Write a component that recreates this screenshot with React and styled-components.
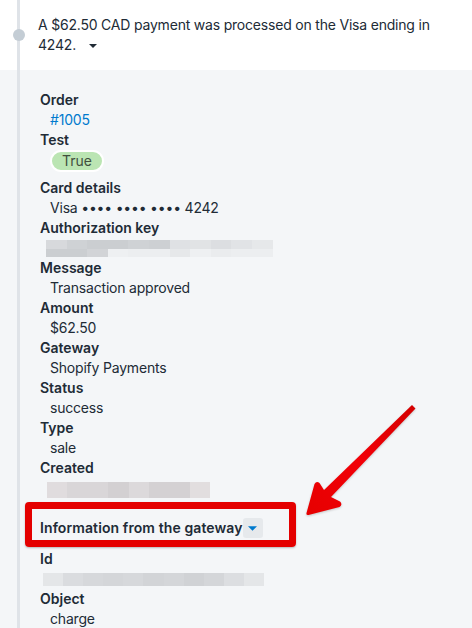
import React from 'react';
import styled, { createGlobalStyle } from 'styled-components';

const GlobalStyle = createGlobalStyle`
  html, body {
    margin: 0;
    padding: 0;
    background: #f4f6f8;
  }
  body {
    font-family: Inter, "Noto Sans", "Liberation Sans", sans-serif;
    font-size: 14px;
    line-height: 20px;
    color: #212b36;
  }
`;

const authRows = [
  {
    height: 9,
    cells: ['#d7d9dc', '#cfd2d5', '#cbced1', '#cbced1', '#cfd2d5', '#cdd0d3', '#dfe1e4', '#e1e3e5', '#dcdee1', '#e1e3e6', '#e6e8ea'],
  },
  {
    height: 8,
    cells: ['#cbced1', '#cbced1', '#d2d4d7', '#eef0f2', '#eceef0', '#eceef0', '#e6e8ea', '#eef0f2', '#eaecee', '#eceef0', '#eceef0'],
  },
];

const createdRows = [
  {
    height: 16,
    cells: ['#e0dcde', '#d9d6d8', '#d9d6d8', '#d3d0d2', '#dcd9db', '#d4d1d3', '#d4d1d3', '#e2dedf'],
  },
];

const idRows = [
  {
    height: 13,
    cells: ['#e4e6e8', '#dadcdf', '#d6d8db', '#d4d6d9', '#d6d8db', '#d2d4d7', '#d4d6d9', '#d0d2d5', '#d4d6d9', '#dcdee1', '#e4e6e8'],
  },
];

function Redacted({ rows, offset, cell, top }) {
  return (
    <RedactedWrap offset={offset} top={top}>
      {rows.map((row, i) => (
        <RedactedRow key={i} h={row.height}>
          {row.cells.map((c, j) => (
            <Pixel key={j} color={c} w={cell} />
          ))}
        </RedactedRow>
      ))}
    </RedactedWrap>
  );
}

function Field({ label, children }) {
  return (
    <FieldBlock>
      <Label>{label}</Label>
      {children}
    </FieldBlock>
  );
}

function App() {
  return (
    <>
      <GlobalStyle />
      <Timeline>
        <Event>
          <EventInner>
            <Dot />
            <EventText>
              A $62.50 CAD payment was processed on the Visa ending in 4242.
              <Caret viewBox="0 0 8 4" width="8" height="4">
                <path d="M0 0h8L4 4z" fill="#212b36" />
              </Caret>
            </EventText>
          </EventInner>
        </Event>

        <Details>
          <DetailsInner>
            <Field label="Order">
              <Value>
                <Link href="#">#1005</Link>
              </Value>
            </Field>
            <Field label="Test">
              <BadgeRow>
                <Badge>True</Badge>
              </BadgeRow>
            </Field>
            <Field label="Card details">
              <Value>Visa •••• •••• •••• 4242</Value>
            </Field>
            <Field label="Authorization key">
              <Redacted rows={authRows} offset={6} cell={20.6} top={2} />
            </Field>
            <Field label="Message">
              <Value>Transaction approved</Value>
            </Field>
            <Field label="Amount">
              <Value>$62.50</Value>
            </Field>
            <Field label="Gateway">
              <Value>Shopify Payments</Value>
            </Field>
            <Field label="Status">
              <Value>success</Value>
            </Field>
            <Field label="Type">
              <Value>sale</Value>
            </Field>
            <Field label="Created">
              <Redacted rows={createdRows} offset={7} cell={20.4} top={4} />
            </Field>

            <SectionHeader>
              <SectionTitle>Information from the gateway</SectionTitle>
              <ToggleButton type="button">
                <svg viewBox="0 0 8 4" width="9" height="5">
                  <path d="M0 0h8L4 4z" fill="#007ace" />
                </svg>
              </ToggleButton>
              <Highlight />
              <Arrow viewBox="0 0 120 120" width="120" height="120">
                <defs>
                  <linearGradient id="arrowFill" x1="0" y1="1" x2="1" y2="0">
                    <stop offset="0" stopColor="#e60000" />
                    <stop offset="0.5" stopColor="#f20008" />
                    <stop offset="1" stopColor="#d40000" />
                  </linearGradient>
                </defs>
                <path
                  d="M112 5 L115.5 8.5 L31 97 L40 101.5 Q43 104.5 39.5 107 L8.5 115 Q6 115.5 6.5 113 L14.5 84 Q16.5 80.5 19.5 83 L24 90 Z"
                  fill="url(#arrowFill)"
                />
              </Arrow>
            </SectionHeader>

            <Field label="Id">
              <Redacted rows={idRows} offset={3} cell={20.1} top={4} />
            </Field>
            <Field label="Object">
              <Value>charge</Value>
            </Field>
          </DetailsInner>
        </Details>
      </Timeline>
    </>
  );
}

const Timeline = styled.div`
  width: 472px;
  min-height: 628px;
  display: flex;
  flex-direction: column;
  background: #f4f6f8;
`;

const Event = styled.div`
  background: #ffffff;
  padding-left: 17px;
`;

const EventInner = styled.div`
  position: relative;
  border-left: 3px solid #dfe3e8;
  padding: 15px 30px 15px 18px;
`;

const Dot = styled.span`
  position: absolute;
  left: -7.5px;
  top: 29px;
  width: 12px;
  height: 12px;
  border-radius: 50%;
  background: #c4cdd5;
`;

const EventText = styled.p`
  margin: 0;
  max-width: 410px;
  font-size: 14px;
  line-height: 20px;
  letter-spacing: -0.2px;
  color: #212b36;
`;

const Caret = styled.svg`
  display: inline-block;
  margin-left: 13px;
  vertical-align: middle;
`;

const Details = styled.div`
  flex: 1;
  padding-left: 17px;
`;

const DetailsInner = styled.div`
  min-height: 100%;
  border-left: 3px solid #dfe3e8;
  padding: 20px 0 0 20px;
`;

const FieldBlock = styled.div`
  display: flex;
  flex-direction: column;
`;

const Label = styled.div`
  font-weight: 600;
  font-size: 14px;
  line-height: 20px;
  color: #212b36;
`;

const Value = styled.div`
  margin-left: 10px;
  font-size: 14px;
  line-height: 20px;
  letter-spacing: -0.2px;
  color: #212b36;
`;

const Link = styled.a`
  color: #007ace;
  text-decoration: none;
`;

const BadgeRow = styled.div`
  display: flex;
  margin-left: 10px;
  padding-bottom: 6px;
`;

const Badge = styled.span`
  display: inline-flex;
  align-items: center;
  height: 22px;
  padding: 0 10px;
  border: 2px solid #ffffff;
  border-radius: 12px;
  background: #bbe5b3;
  color: #414f3e;
  font-size: 14px;
  line-height: 20px;
  box-sizing: border-box;
`;

const RedactedWrap = styled.div`
  height: 20px;
  padding-top: ${p => p.top}px;
  margin-left: ${p => p.offset}px;
  box-sizing: border-box;
  display: flex;
  flex-direction: column;
`;

const RedactedRow = styled.div`
  display: flex;
  height: ${p => p.h}px;
`;

const Pixel = styled.span`
  width: ${p => p.w}px;
  height: 100%;
  background: ${p => p.color};
`;

const SectionHeader = styled.div`
  position: relative;
  display: inline-flex;
  align-self: flex-start;
  align-items: center;
  margin: 20px 0 11px;
  height: 20px;
`;

const SectionTitle = styled.span`
  font-weight: 600;
  font-size: 14px;
  line-height: 20px;
  letter-spacing: 0.1px;
  color: #212b36;
`;

const ToggleButton = styled.button`
  display: flex;
  align-items: center;
  justify-content: center;
  width: 20px;
  height: 20px;
  padding: 0;
  border: none;
  border-radius: 3px;
  background: #e6e9ec;
  cursor: pointer;
`;

const Highlight = styled.span`
  position: absolute;
  left: -15px;
  top: -16px;
  right: -33px;
  bottom: -9px;
  border: 7px solid #e40000;
  border-radius: 4px;
  box-shadow: 0 1px 2px rgba(0, 0, 0, 0.25);
  pointer-events: none;
`;

const Arrow = styled.svg`
  position: absolute;
  left: 260px;
  top: -118px;
  filter: drop-shadow(0 1px 1px rgba(0, 0, 0, 0.2));
  pointer-events: none;
`;

export default App;
